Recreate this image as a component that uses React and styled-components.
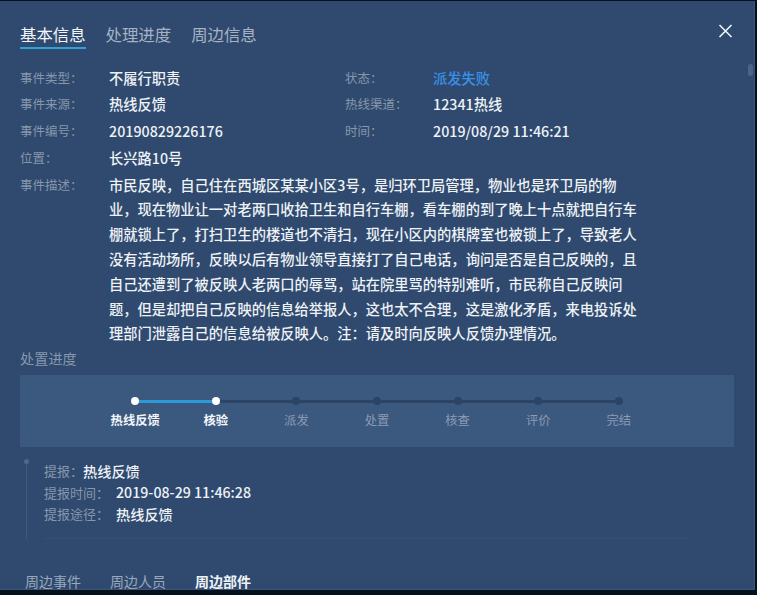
import React from "react";
import styled, { createGlobalStyle } from "styled-components";

const GlobalStyle = createGlobalStyle`
  html, body {
    margin: 0;
    padding: 0;
    background: #04101c;
  }
  body {
    font-family: "Noto Sans CJK SC", "Noto Sans", sans-serif;
    text-spacing-trim: space-all;
  }
`;

const Panel = styled.div`
  position: relative;
  box-sizing: border-box;
  width: 755px;
  height: 589px;
  margin-top: 1px;
  padding: 21px 0 0 20px;
  background: #2f4a6e;
  border-right: 1px solid #3b5679;
  border-bottom: 1px solid #3b5679;
  overflow: hidden;
`;

const ScrollThumb = styled.div`
  position: absolute;
  top: 63px;
  right: 1px;
  width: 5px;
  height: 12px;
  border-radius: 3px;
  background: #4b6485;
`;

const Header = styled.div`
  display: flex;
  align-items: flex-start;
  padding-right: 21px;
`;

const Tabs = styled.div`
  display: flex;
  gap: 20px;
`;

const Tab = styled.div`
  font-size: 16.4px;
  line-height: 24px;
  padding-bottom: 1px;
  color: ${(p) => (p.$active ? "#f2f5f9" : "#a7b3c4")};
  border-bottom: 2px solid ${(p) => (p.$active ? "#2ba4d6" : "transparent")};
`;

const Close = styled.button`
  margin-left: auto;
  margin-top: 2px;
  padding: 0;
  border: 0;
  background: none;
  width: 15px;
  height: 14px;
  cursor: pointer;
  svg {
    display: block;
  }
`;

const InfoGrid = styled.div`
  display: grid;
  grid-template-columns: 89px 236px 88px 1fr;
  grid-auto-rows: 26.67px;
  align-items: center;
  margin-top: 15px;
`;

const Label = styled.div`
  font-size: 12.5px;
  color: #8797ad;
  white-space: nowrap;
`;

const Value = styled.div`
  font-size: 14.27px;
  font-weight: 500;
  color: ${(p) => (p.$blue ? "#3a8fe8" : "#eef2f7")};
  white-space: nowrap;
`;

const DescRow = styled.div`
  display: flex;
  margin-top: 2px;
  line-height: 24.8px;
`;

const DescLabel = styled(Label)`
  width: 89px;
  flex: none;
`;

const DescText = styled.p`
  margin: 0;
  width: 531px;
  font-size: 14.27px;
  font-weight: 500;
  color: #eef2f7;
`;

const SectionTitle = styled.div`
  margin-top: 2px;
  font-size: 14.2px;
  line-height: 20px;
  color: #8797ad;
`;

const StepBox = styled.div`
  box-sizing: border-box;
  width: 714px;
  height: 72px;
  margin-top: 7px;
  padding-top: 22px;
  background: #3b587f;
`;

const Track = styled.div`
  display: flex;
  justify-content: center;
  align-items: center;
  height: 8px;
`;

const Dot = styled.div`
  width: 8px;
  height: 8px;
  border-radius: 50%;
  flex: none;
  background: ${(p) => (p.$done ? "#ffffff" : "#2b4364")};
`;

const Segment = styled.div`
  width: 72.6px;
  height: 3px;
  flex: none;
  background: ${(p) => (p.$done ? "#2a9ad8" : "#2c4567")};
`;

const StepLabels = styled.div`
  display: flex;
  justify-content: center;
  margin-top: 7px;
`;

const StepLabel = styled.div`
  width: 80.6px;
  flex: none;
  text-align: center;
  font-size: 12.3px;
  line-height: 16px;
  font-weight: ${(p) => (p.$done ? 700 : 400)};
  color: ${(p) => (p.$done ? "#f4f6fa" : "#8a9bb5")};
`;

const Timeline = styled.div`
  display: flex;
  margin-top: 12px;
  padding-left: 4px;
`;

const Rail = styled.div`
  width: 5px;
  display: flex;
  flex-direction: column;
  align-items: center;
`;

const RailDot = styled.div`
  width: 5px;
  height: 5px;
  border-radius: 50%;
  background: #4a6890;
`;

const RailLine = styled.div`
  flex: 1;
  width: 1px;
  background: #3c597e;
`;

const TimelineBody = styled.div`
  width: 646px;
  margin-left: 15px;
  padding: 1px 0 13px;
  border-bottom: 1px solid rgba(255, 255, 255, 0.035);
`;

const TimelineRow = styled.div`
  display: flex;
  align-items: center;
  height: 21.5px;
`;

const TLabel = styled.span`
  font-size: 13px;
  color: #8797ad;
  margin-right: ${(p) => (p.$wide ? "7px" : "0")};
`;

const TValue = styled.span`
  font-size: 14.2px;
  font-weight: 500;
  color: #eef2f7;
`;

const BottomTabs = styled.div`
  display: flex;
  gap: 29px;
  margin-top: 32px;
  padding-left: 5px;
`;

const BottomTab = styled.div`
  font-size: 14px;
  line-height: 20px;
  font-weight: ${(p) => (p.$active ? 700 : 400)};
  color: ${(p) => (p.$active ? "#eef2f7" : "#9aa8bb")};
`;

const info = [
  ["事件类型：", "不履行职责", "状态：", "派发失败", true],
  ["事件来源：", "热线反馈", "热线渠道：", "12341热线"],
  ["事件编号：", "20190829226176", "时间：", "2019/08/29 11:46:21"],
  ["位置：", "长兴路10号"],
];

const steps = [
  { name: "热线反馈", done: true },
  { name: "核验", done: true },
  { name: "派发" },
  { name: "处置" },
  { name: "核查" },
  { name: "评价" },
  { name: "完结" },
];

const report = [
  { label: "提报：", value: "热线反馈" },
  { label: "提报时间：", value: "2019-08-29 11:46:28", wide: true },
  { label: "提报途径：", value: "热线反馈", wide: true },
];

const description =
  "市民反映，自己住在西城区某某小区3号，是归环卫局管理，物业也是环卫局的物业，现在物业让一对老两口收拾卫生和自行车棚，看车棚的到了晚上十点就把自行车棚就锁上了，打扫卫生的楼道也不清扫，现在小区内的棋牌室也被锁上了，导致老人没有活动场所，反映以后有物业领导直接打了自己电话，询问是否是自己反映的，且自己还遭到了被反映人老两口的辱骂，站在院里骂的特别难听，市民称自己反映问题，但是却把自己反映的信息给举报人，这也太不合理，这是激化矛盾，来电投诉处理部门泄露自己的信息给被反映人。注：请及时向反映人反馈办理情况。";

const App = () => {
  return (
    <>
      <GlobalStyle />
      <Panel>
        <ScrollThumb />
        <Header>
          <Tabs>
            <Tab $active>基本信息</Tab>
            <Tab>处理进度</Tab>
            <Tab>周边信息</Tab>
          </Tabs>
          <Close aria-label="关闭">
            <svg width="15" height="14" viewBox="0 0 15 14">
              <path d="M1.5 1 L13.5 13 M13.5 1 L1.5 13" stroke="#f2f5f9" strokeWidth="1.6" />
            </svg>
          </Close>
        </Header>

        <InfoGrid>
          {info.map(([l1, v1, l2, v2, blue], i) => (
            <React.Fragment key={i}>
              <Label>{l1}</Label>
              <Value>{v1}</Value>
              {l2 ? <Label>{l2}</Label> : <div />}
              {v2 ? <Value $blue={blue}>{v2}</Value> : <div />}
            </React.Fragment>
          ))}
        </InfoGrid>

        <DescRow>
          <DescLabel>事件描述：</DescLabel>
          <DescText>{description}</DescText>
        </DescRow>

        <SectionTitle>处置进度</SectionTitle>
        <StepBox>
          <Track>
            {steps.map((s, i) => (
              <React.Fragment key={s.name}>
                {i > 0 && <Segment $done={s.done} />}
                <Dot $done={s.done} />
              </React.Fragment>
            ))}
          </Track>
          <StepLabels>
            {steps.map((s) => (
              <StepLabel key={s.name} $done={s.done}>
                {s.name}
              </StepLabel>
            ))}
          </StepLabels>
        </StepBox>

        <Timeline>
          <Rail>
            <RailDot />
            <RailLine />
          </Rail>
          <TimelineBody>
            {report.map((r) => (
              <TimelineRow key={r.label}>
                <TLabel $wide={r.wide}>{r.label}</TLabel>
                <TValue>{r.value}</TValue>
              </TimelineRow>
            ))}
          </TimelineBody>
        </Timeline>

        <BottomTabs>
          <BottomTab>周边事件</BottomTab>
          <BottomTab>周边人员</BottomTab>
          <BottomTab $active>周边部件</BottomTab>
        </BottomTabs>
      </Panel>
    </>
  );
};

export default App;
